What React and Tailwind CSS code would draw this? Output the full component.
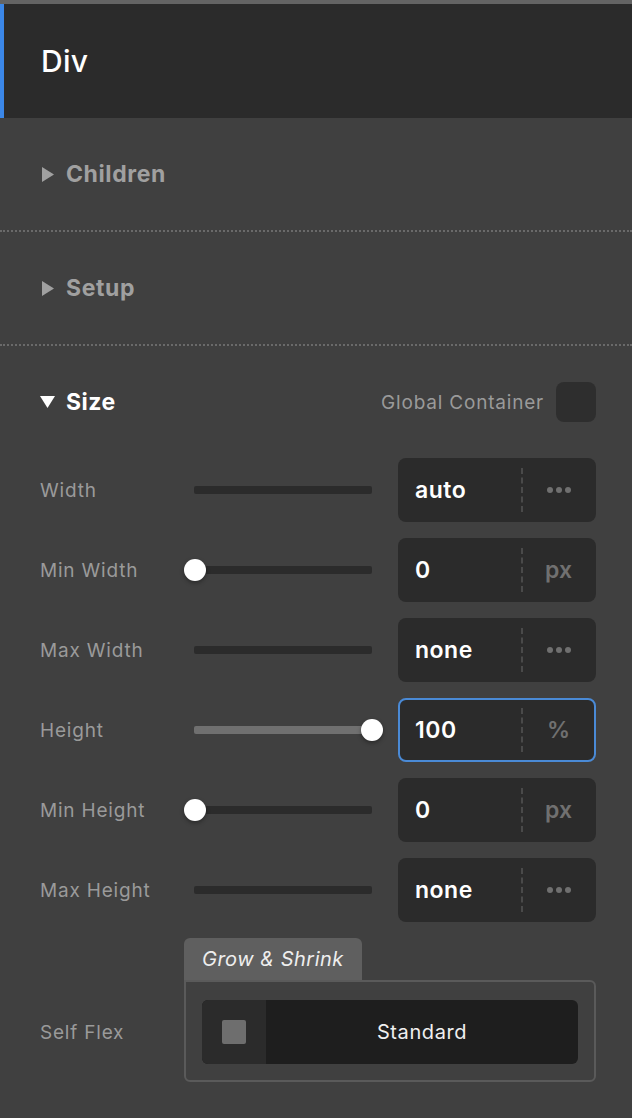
import { useState } from 'react';

const rows = [
    { label: 'Width', value: 'auto', unit: 'dots', slider: 'none' },
    { label: 'Min Width', value: '0', unit: 'px', slider: 'start' },
    { label: 'Max Width', value: 'none', unit: 'dots', slider: 'none' },
    { label: 'Height', value: '100', unit: '%', slider: 'end', active: true },
    { label: 'Min Height', value: '0', unit: 'px', slider: 'start' },
    { label: 'Max Height', value: 'none', unit: 'dots', slider: 'none' },
];

function Caret({ open, color }) {
    if (open) {
        return (
            <svg width="15" height="12" viewBox="0 0 15 12" className="shrink-0">
                <path d="M0 0 L15 0 L7.5 12 Z" fill={color} />
            </svg>
        );
    }
    return (
        <svg width="12" height="15" viewBox="0 0 12 15" className="shrink-0">
            <path d="M0 0 L12 7.5 L0 15 Z" fill={color} />
        </svg>
    );
}

function Slider({ mode }) {
    return (
        <div className="relative w-[178px] h-[22px] flex items-center">
            <div className={`w-full h-[8px] rounded-[2px] ${mode === 'end' ? 'bg-[#707070]' : 'bg-[#2b2b2b]'}`} />
            {mode === 'start' && (
                <div className="absolute left-[-10px] w-[22px] h-[22px] rounded-full bg-white shadow-[0_2px_4px_rgba(0,0,0,0.35)]" />
            )}
            {mode === 'end' && (
                <div className="absolute right-[-11px] w-[22px] h-[22px] rounded-full bg-white shadow-[0_2px_4px_rgba(0,0,0,0.35)]" />
            )}
        </div>
    );
}

function ValueInput({ value, unit, active }) {
    return (
        <div className={`w-[198px] h-[64px] rounded-[8px] bg-[#2b2b2b] flex items-center ${active ? 'border-2 border-[#4a8ad6]' : 'border-2 border-transparent'}`}>
            <div className="flex-1 pl-[15px] text-[23px] font-semibold tracking-[0.5px] text-white">{value}</div>
            <div className="h-[44px] border-l-2 border-dashed border-[#4a4a4a]" />
            <div className="w-[71px] flex items-center justify-center text-[23px] font-semibold text-[#707070]">
                {unit === 'dots' ? (
                    <div className="flex gap-[3px]">
                        <span className="w-[6px] h-[6px] rounded-full bg-[#707070]" />
                        <span className="w-[6px] h-[6px] rounded-full bg-[#707070]" />
                        <span className="w-[6px] h-[6px] rounded-full bg-[#707070]" />
                    </div>
                ) : unit}
            </div>
        </div>
    );
}

function Collapsed({ title }) {
    return (
        <div className="h-[114px] flex items-center gap-[12px] pl-[42px] border-b-2 border-dotted border-[#6a6a6a]">
            <Caret color="#a0a0a0" />
            <span className="text-[23px] font-bold text-[#a0a0a0] tracking-[0.6px]">{title}</span>
        </div>
    );
}

export default function App() {
    const [global, setGlobal] = useState(false);

    return (
        <div className="w-[632px] min-h-[1118px] bg-[#404040] font-['Inter','Liberation_Sans',sans-serif] border-t-4 border-[#646464]">
            <div className="h-[114px] bg-[#2b2b2b] border-l-4 border-[#3b87e8] flex items-center pl-[37px]">
                <span className="text-[30px] font-medium tracking-[0.3px] text-white">Div</span>
            </div>

            <Collapsed title="Children" />
            <Collapsed title="Setup" />

            <div className="pl-[40px] pr-[36px] pt-[36px]">
                <div className="flex items-center h-[40px]">
                    <div className="flex items-center gap-[11px]">
                        <Caret open color="#ffffff" />
                        <span className="text-[23px] font-bold tracking-[0.5px] text-white">Size</span>
                    </div>
                    <span className="ml-auto text-[19px] tracking-[0.8px] text-[#9a9a9a] mr-[12px] mt-[2px]">Global Container</span>
                    <button
                        onClick={() => setGlobal(!global)}
                        className="w-[40px] h-[40px] rounded-[8px] bg-[#2e2e2e]"
                    />
                </div>

                <div className="mt-[36px] flex flex-col gap-[16px]">
                    {rows.map((row) => (
                        <div key={row.label} className="flex items-center">
                            <span className="w-[154px] text-[19px] tracking-[0.8px] text-[#9a9a9a] mt-[2px]">{row.label}</span>
                            <Slider mode={row.slider} />
                            <div className="ml-auto">
                                <ValueInput value={row.value} unit={row.unit} active={row.active} />
                            </div>
                        </div>
                    ))}
                </div>

                <div className="mt-[16px] flex items-end">
                    <span className="w-[144px] text-[19px] tracking-[0.8px] text-[#9a9a9a] mb-[35px]">Self Flex</span>
                    <div className="flex-1 flex flex-col items-start">
                        <div className="h-[42px] px-[18px] rounded-t-[6px] bg-[#5f5f5f] flex items-center">
                            <span className="text-[20px] italic tracking-[0.5px] text-[#eeeeee]">Grow &amp; Shrink</span>
                        </div>
                        <div className="w-full border-2 border-[#5a5a5a] rounded-b-[6px] rounded-tr-[6px] px-[16px] pt-[18px] pb-[16px]">
                            <div className="h-[64px] rounded-[6px] bg-[#1e1e1e] flex overflow-hidden">
                                <div className="w-[64px] bg-[#2b2b2b] flex items-center justify-center">
                                    <div className="w-[24px] h-[24px] rounded-[2px] bg-[#6e6e6e]" />
                                </div>
                                <div className="flex-1 flex items-center justify-center text-[20px] tracking-[0.6px] text-[#f0f0f0]">
                                    Standard
                                </div>
                            </div>
                        </div>
                    </div>
                </div>
            </div>
        </div>
    );
}
